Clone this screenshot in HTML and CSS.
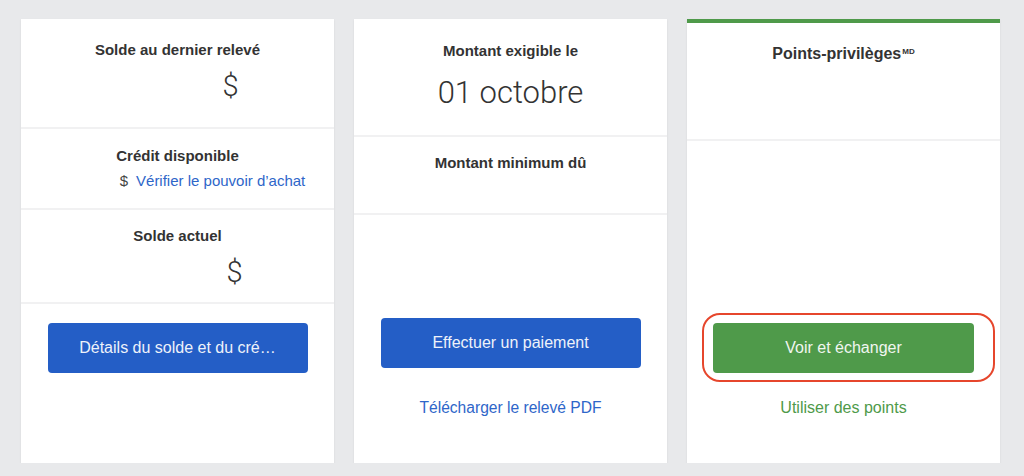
FILE: index.html
```html
<!DOCTYPE html>
<html lang="fr">
<head>
<meta charset="utf-8">
<title>Sommaire du compte</title>
<link rel="stylesheet" href="styles.css">
</head>
<body>
<main class="cards">
  <section class="card">
    <div class="sec sec-a1">
      <h3 class="label">Solde au dernier relevé</h3>
      <div class="big amount-1">$</div>
    </div>
    <div class="sec sec-a2">
      <h3 class="label">Crédit disponible</h3>
      <div class="credit"><span class="cur">$</span><a class="link" href="#">Vérifier le pouvoir d’achat</a></div>
    </div>
    <div class="sec sec-a3">
      <h3 class="label">Solde actuel</h3>
      <div class="big amount-2">$</div>
    </div>
    <div class="actions act-a">
      <button class="btn btn-blue">Détails du solde et du cré…</button>
    </div>
  </section>

  <section class="card">
    <div class="sec sec-b1">
      <h3 class="label">Montant exigible le</h3>
      <div class="date">01 octobre</div>
    </div>
    <div class="sec sec-b2">
      <h3 class="label">Montant minimum dû</h3>
    </div>
    <div class="actions act-b">
      <button class="btn btn-blue">Effectuer un paiement</button>
      <a class="link link-b" href="#">Télécharger le relevé PDF</a>
    </div>
  </section>

  <section class="card card-rewards">
    <div class="sec sec-c1">
      <h3 class="label label-lg">Points-privilèges<sup class="md">MD</sup></h3>
    </div>
    <div class="actions act-c">
      <div class="highlight">
        <button class="btn btn-green">Voir et échanger</button>
      </div>
      <a class="link link-green" href="#">Utiliser des points</a>
    </div>
  </section>
</main>
</body>
</html>
```
FILE: styles.css
```css
* { box-sizing: border-box; }

html, body {
  margin: 0;
  padding: 0;
  background: #e8e9eb;
  font-family: "Liberation Sans", Arial, sans-serif;
  color: #333;
}

.cards {
  display: flex;
  gap: 20px;
  padding: 19px 24px 0 21px;
}

.card {
  width: 313px;
  height: 444px;
  background: #fff;
  display: flex;
  flex-direction: column;
  box-shadow: 0 1px 2px rgba(0, 0, 0, 0.08);
}

.card-rewards {
  border-top: 4px solid #4f9a4a;
}

.sec {
  border-bottom: 2px solid #f1f1f2;
  text-align: center;
}

.label {
  margin: 0;
  font-size: 15px;
  line-height: 16px;
  font-weight: bold;
  color: #333;
}

.label-lg {
  font-size: 16px;
  line-height: 18px;
}

.md {
  font-size: 8px;
  vertical-align: top;
  position: relative;
  top: -2px;
  margin-left: 1px;
}

.big {
  font-family: Roboto, "Liberation Sans", sans-serif;
  font-weight: 300;
  font-size: 29px;
  line-height: 34px;
  color: #333;
}

.amount-1 { margin-top: 11px; padding-left: 106px; }
.amount-2 { margin-top: 11px; padding-left: 114px; }

.date {
  font-family: Roboto, "Liberation Sans", sans-serif;
  font-weight: 300;
  font-size: 31px;
  line-height: 36px;
  color: #333;
  margin-top: 16px;
}

.credit {
  margin-top: 8px;
  padding-left: 70px;
  font-size: 15px;
  line-height: 18px;
}

.cur {
  color: #444;
  margin-right: 8px;
}

.link {
  color: #2e66c9;
  text-decoration: none;
  font-size: 15px;
  line-height: 18px;
}

.sec-a1 { height: 110px; padding-top: 23px; }
.sec-a2 { height: 81px; padding-top: 19px; }
.sec-a3 { height: 94px; padding-top: 18px; }

.sec-b1 { height: 118px; padding-top: 24px; }
.sec-b2 { height: 78px; padding-top: 18px; }

.sec-c1 { height: 118px; padding-top: 22px; }

.actions {
  display: flex;
  flex-direction: column;
  align-items: center;
}

.act-a { padding-top: 19px; }
.act-b { padding-top: 103px; }
.act-c { padding-top: 182px; }

.btn {
  width: 260px;
  height: 50px;
  border: 0;
  border-radius: 4px;
  font-family: "Liberation Sans", Arial, sans-serif;
  font-size: 16px;
  color: #eef2fa;
  cursor: pointer;
}

.btn-blue { background: #245ec6; }
.btn-green { background: #4f9a4a; width: 261px; color: #f1f6f0; }

.link-b {
  margin-top: 31px;
  font-size: 15.6px;
}

.link-green {
  color: #4f9a4a;
  font-size: 16px;
  margin-top: 26px;
}

.highlight {
  position: relative;
}

.highlight::after {
  content: "";
  position: absolute;
  left: -11px;
  right: -21px;
  top: -10px;
  bottom: -9px;
  border: 2.5px solid #e6462c;
  border-radius: 18px;
  pointer-events: none;
}
```
